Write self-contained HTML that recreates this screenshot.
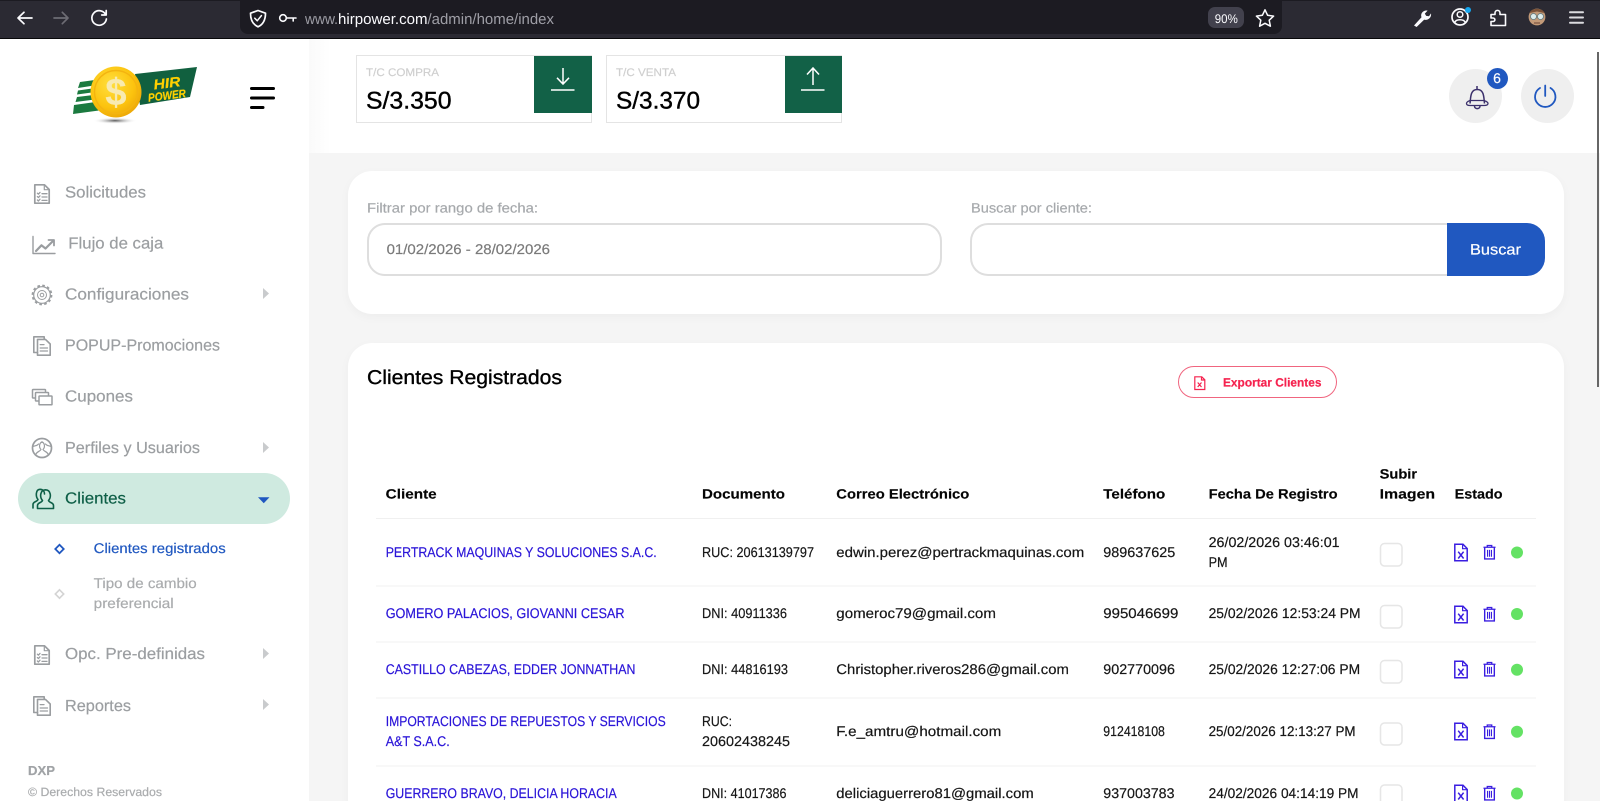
<!DOCTYPE html>
<html lang="es">
<head>
<meta charset="utf-8">
<title>HIR Power - Clientes Registrados</title>
<style>
html,body{margin:0;padding:0;width:1600px;height:801px;overflow:hidden;background:#f5f5f5;font-family:"Liberation Sans",sans-serif}
#wrap{position:relative;width:1600px;height:801px;overflow:hidden;background:#f5f5f5}
.abs{position:absolute}
#bar{left:0;top:0;width:1600px;background:#2b2a33;border-top:1px solid #1c1b22;border-bottom:1px solid #08080a;box-sizing:content-box;height:37px}
#url{left:240px;top:1px;width:1042px;height:33px;background:#1c1b22;border-radius:0 0 8px 8px}
#zoomp{left:1208px;top:7px;width:36px;height:21px;background:#42414d;border-radius:7px}
#side{left:0;top:39px;width:309px;height:762px;background:#fff}
#top{left:309px;top:39px;width:1291px;height:114px;background:linear-gradient(90deg,#fafafa 0,#fff 22px)}
.tc{top:54.500px;height:68.500px;box-sizing:border-box;border:1px solid #e4e4e4;background:#fff}
.tcg{top:56px;height:57px;background:#126147}
.circ{top:69px;width:53px;height:54px;border-radius:50%;background:#efefef}
#badge{left:1486.500px;top:67.500px;width:21px;height:21px;border-radius:50%;background:#2058c0}
.card{left:348px;width:1216px;background:#fff;border-radius:24px;box-shadow:0 3px 10px rgba(0,0,0,.035)}
.inp{top:222.500px;height:53px;box-sizing:border-box;border:2px solid #dedede;background:#fff}
#pill{left:18px;top:473px;width:272px;height:51px;border-radius:26px;background:#cfeae0}
#btn{left:1446.500px;top:222.500px;width:98.500px;height:53px;background:#2058c0;border-radius:0 18px 18px 0}
#exp{left:1178px;top:366px;width:159px;height:32px;box-sizing:border-box;border:1.500px solid #f0657f;border-radius:16px;background:#fff}
#scroll{left:1597px;top:52px;width:1.500px;height:335px;background:#666}
svg#o{position:absolute;left:0;top:0;width:1600px;height:801px;overflow:hidden;text-rendering:geometricPrecision;font-family:"Liberation Sans",sans-serif;color:#161616}
text{font-size:14px;fill:currentColor;stroke:currentColor;stroke-width:.2px}
.m{font-size:16px;color:#9b9ea1}
.h{font-weight:bold;font-size:13.500px;color:#050505;stroke-width:.15px}
.c{color:#2a14d8}
.l{font-size:13.500px;color:#a6a9ac}
.bar{stroke-width:0}
.ic{fill:none;stroke:#9a9da0;stroke-width:1.500;stroke-linejoin:round;stroke-linecap:round}
</style>
</head>
<body>
<div id="wrap">
<div class="abs" id="side"></div>
<div class="abs" id="top"></div>
<div class="abs" id="bar"></div>
<div class="abs" id="url"></div>
<div class="abs" id="zoomp"></div>

<div class="abs tc" style="left:355.500px;width:236px"></div>
<div class="abs tcg" style="left:534px;width:57.500px"></div>
<div class="abs tc" style="left:606px;width:236px"></div>
<div class="abs tcg" style="left:785px;width:56.500px"></div>
<div class="abs circ" style="left:1449px"></div>
<div class="abs circ" style="left:1520.500px"></div>
<div class="abs" id="badge"></div>

<div class="abs card" style="top:171px;height:143px"></div>
<div class="abs card" style="top:343px;height:480px"></div>
<div class="abs inp" style="left:367px;width:574.500px;border-radius:18px"></div>
<div class="abs inp" style="left:970px;width:477px;border-radius:18px 0 0 18px;border-right:0"></div>
<div class="abs" id="btn"></div>
<div class="abs" id="exp"></div>
<div class="abs" id="pill"></div>
<div class="abs" id="scroll"></div>

<svg id="o" viewBox="0 0 1600 801" xmlns="http://www.w3.org/2000/svg">
<defs>
<radialGradient id="coin" cx="40%" cy="35%" r="75%"><stop offset="0" stop-color="#ffdf3d"/><stop offset=".6" stop-color="#fcc30e"/><stop offset="1" stop-color="#e8a006"/></radialGradient>
<radialGradient id="sh"><stop offset="0" stop-color="#555"/><stop offset="1" stop-color="#fff" stop-opacity="0"/></radialGradient>
<symbol id="xls" viewBox="0 0 14 18" overflow="visible">
<path d="M.8.8H9L13.2 5V17.2H.8Z" fill="none" stroke="#3a1ee0" stroke-width="1.500" stroke-linejoin="miter"/>
<path d="M8.600 1V5.200H13" fill="none" stroke="#3a1ee0" stroke-width="1.200"/>
<path d="M4.200 8.200L9.600 15M9.600 8.200L4.200 15" fill="none" stroke="#3a1ee0" stroke-width="1.500"/>
</symbol>
<symbol id="tr" viewBox="0 0 14 16" overflow="visible">
<path d="M.5 2.600H13.500M4.600 2.400V.7H9.400V2.400" fill="none" stroke="#3a1ee0" stroke-width="1.400"/>
<path d="M1.800 2.800V15.200H12.200V2.800" fill="none" stroke="#3a1ee0" stroke-width="1.500"/>
<path d="M4.900 5.500V12.800M7 5.500V12.800M9.100 5.500V12.800" fill="none" stroke="#3a1ee0" stroke-width="1.200"/>
</symbol>
<symbol id="doc" viewBox="0 0 16 20" overflow="visible">
<path d="M.8.8H10.500L15.200 5.500V19.200H.8Z" fill="none" stroke-width="1.700"/>
<path d="M10.300 1V5.700H15" fill="none" stroke-width="1.200"/>
<path d="M3.400 9.200l1 1 1.600-1.800M3.400 12.600l1 1 1.600-1.800M3.400 16l1 1 1.600-1.800M8 9.700h5M8 13h5M8 16.400h5" fill="none" stroke-width="1.300"/>
</symbol>
<symbol id="docs" viewBox="0 0 18 20" overflow="visible">
<path d="M4.500 16.500H.8V.8H11.200V3" fill="none" stroke-width="1.600"/>
<path d="M4.500 3.400H12.500L17.200 8V19.200H4.500Z" fill="none" stroke-width="1.600"/>
<path d="M7.200 8.600H11M7.200 12H14.500M7.200 15H14.500" fill="none" stroke-width="1.300"/>
</symbol>
<symbol id="caret" viewBox="0 0 6 11" overflow="visible"><path d="M0 0L6 5.500L0 11Z" fill="#c9cbcd"/></symbol>
</defs>

<!-- browser toolbar -->
<g fill="none" stroke-linecap="round" stroke-linejoin="round" stroke-width="1.700" stroke="#fbfbfe">
<path d="M32 18H18M24 12.300L18 18L24 23.700"/>
<path d="M54 18H68M62.300 12.300L68 18L62.300 23.700" stroke="#6d6c74"/>
<path d="M105.600 14.500A7.300 7.300 0 1 0 106.400 19M106.200 10.500V15H101.700"/>
<path d="M258 10.500L265.500 13.200C265.500 20 263 24.500 258 26.800C253 24.500 250.500 20 250.500 13.200Z"/>
<path d="M254.800 18.200L257.200 20.800L261.400 15.600" stroke-width="1.500"/>
<circle cx="283" cy="18" r="3.300" stroke-width="1.600"/>
<path d="M286.500 18H296M293.200 18V21" stroke-width="1.600"/>
<path d="M1265 9.800L1267.600 15.300L1273.600 16.100L1269.200 20.200L1270.400 26.200L1265 23.300L1259.600 26.200L1260.800 20.200L1256.400 16.100L1262.400 15.300Z" stroke-width="1.500"/>
<circle cx="1460" cy="17" r="8" stroke-width="1.700"/>
<circle cx="1460" cy="14.500" r="2.800" stroke-width="1.500"/>
<path d="M1454.800 22.400C1456 18.800 1464 18.800 1465.200 22.400" stroke-width="1.500"/>
<path d="M1491 14.500H1495V13C1495 9.500 1500 9.500 1500 13V14.500H1505.500V25.500H1491V21.500H1493C1495.500 21.500 1495.500 18 1493 18H1491Z" stroke-width="1.600"/>
<path d="M1570 12.300H1583M1570 17.500H1583M1570 22.700H1583" stroke="#dcdce0" stroke-width="2"/>
</g>
<path d="M1414 25.500L1421.500 17.200C1420 13.500 1423.500 9.600 1427.600 10.600L1424.800 13.600L1426.200 15.900L1429 16.200L1431 13.400C1431.800 17.800 1427.600 20.800 1424.200 19.600L1416.600 27Z" fill="#fbfbfe"/>
<circle cx="1468" cy="10" r="3" fill="#14a6ef"/>
<circle cx="1537" cy="17" r="8.400" fill="#c39a78"/>
<path d="M1529.500 13C1531 7.500 1543 7.500 1544.500 13L1537 11.500Z" fill="#7a5238"/>
<circle cx="1533.500" cy="16.500" r="3" fill="#dcecec" stroke="#5f7a80" stroke-width=".8"/>
<circle cx="1540.500" cy="16.500" r="3" fill="#dcecec" stroke="#5f7a80" stroke-width=".8"/>
<path d="M1534 23H1540" stroke="#7a5340" stroke-width="1.200"/>
<text class="bar" x="305" y="24" textLength="33" lengthAdjust="spacingAndGlyphs" style="font-size:15px;color:#9e9ea6">www.</text>
<text class="bar" x="338" y="24" textLength="89.500" lengthAdjust="spacingAndGlyphs" style="font-size:15px;color:#fbfbfe">hirpower.com</text>
<text class="bar" x="427.500" y="24" textLength="126.500" lengthAdjust="spacingAndGlyphs" style="font-size:15px;color:#9e9ea6">/admin/home/index</text>
<text class="bar" x="1214.800" y="23" textLength="23" lengthAdjust="spacingAndGlyphs" style="font-size:12.500px;color:#fbfbfe">90%</text>

<!-- logo -->
<ellipse cx="115" cy="120.700" rx="22" ry="3.200" fill="url(#sh)"/>
<path d="M80 82L110 78V83L78 88Z M78 90.500L110 86V90L77 94.500Z M77 97L110 93V97.500L75.500 102Z M74 105L110 100V109L73 114Z" fill="#1b7a3f"/>
<path d="M135 74L197 67L190 97L140 105Z" fill="#11603f"/>
<circle cx="116" cy="92" r="25.500" fill="url(#coin)"/>
<circle cx="116" cy="92" r="21.500" fill="none" stroke="#f4b410" stroke-width="1.400"/>
<text x="116" y="105" text-anchor="middle" style="font-size:38px;font-weight:bold;color:#f8eab0">$</text>
<g transform="rotate(-7 166 88)">
<text x="154" y="88" textLength="27" lengthAdjust="spacingAndGlyphs" style="font-size:14px;font-weight:bold;font-style:italic;color:#ffd000">HIR</text>
<text x="147" y="99.500" textLength="38" lengthAdjust="spacingAndGlyphs" style="font-size:11.500px;font-weight:bold;font-style:italic;color:#ffd000">POWER</text>
</g>
<path d="M251.500 88.500H273.500M251.500 98H273.500M251.500 107.500H263" stroke="#000" stroke-width="3" stroke-linecap="round"/>

<!-- sidebar icons -->
<use href="#doc" x="34" y="184" width="16" height="20" class="ic"/>
<g class="ic">
<path d="M33 236.500V253.500H55" stroke-width="1.400"/>
<path d="M36 251L41.500 245.300L45.500 248.500L53 241" stroke-width="2.200"/>
<path d="M48.500 240H54V245.500" stroke-width="1.800"/>
<circle cx="42" cy="295" r="8.300" stroke-width="1.200"/>
<circle cx="42" cy="295" r="9.500" stroke-width="1.800" stroke-dasharray="2.600 2.370" stroke-linecap="butt"/>
<circle cx="42" cy="295" r="4.500" stroke-width="1"/>
<circle cx="42" cy="295" r="1.800" stroke-width="1"/>
</g>
<use href="#docs" x="33" y="336" width="18" height="20" class="ic"/>
<g class="ic" stroke-width="1.500">
<rect x="32.500" y="389.500" width="13" height="8.500" rx=".6"/>
<rect x="35.500" y="392.500" width="13" height="8.500" rx=".6" fill="#fff"/>
<rect x="39" y="396" width="13" height="8.800" rx=".6" fill="#fff"/>
<circle cx="42" cy="448" r="9.500" stroke-width="1.700"/>
<path d="M35.500 455C37 451 39.500 452 41 449.500C39 447.500 38.800 443.500 42 441.800C45.200 443.500 45 447.500 43 449.500C44.500 452 47 451 48.500 455M33 446.500C35 445.500 37 446 38.500 444M45.500 444C47 446 49 445.500 51 446.500" stroke-width="1.200"/>
</g>
<g fill="none" stroke="#0e5f47" stroke-width="1.600" stroke-linejoin="round" stroke-linecap="round">
<path d="M33 508V504.500C33 501.500 37 502 38 499.500C35.500 496.500 35.500 489.500 40 489.300C43 489.300 44.500 491.500 44.500 494"/>
<path d="M37.500 508.500V505.500C37.500 502.500 41.500 503 42.500 500.500C39.500 497 40 490 45.500 489.800C51 490 51.500 497 48.500 500.500C49.500 503 53.500 502.500 53.500 505.500V508.500Z"/>
</g>
<use href="#doc" x="34" y="645" width="16" height="20" class="ic"/>
<use href="#docs" x="33" y="696" width="18" height="20" class="ic"/>
<use href="#caret" x="263" y="288" width="6" height="11"/>
<use href="#caret" x="263" y="442" width="6" height="11"/>
<use href="#caret" x="263" y="648" width="6" height="11"/>
<use href="#caret" x="263" y="699" width="6" height="11"/>
<path d="M258 497.200H269.500L263.750 503.200Z" fill="#1f57c0"/>
<path d="M59.500 544.800L63.700 549L59.500 553.200L55.300 549Z" fill="none" stroke="#1f57c0" stroke-width="1.800"/>
<path d="M59.500 589.800L63.700 594L59.500 598.200L55.300 594Z" fill="none" stroke="#d4d4d4" stroke-width="1.600"/>

<!-- sidebar text -->
<text class="m" x="65" y="197.500" textLength="81" lengthAdjust="spacingAndGlyphs">Solicitudes</text>
<text class="m" x="68.300" y="248.500" textLength="95" lengthAdjust="spacingAndGlyphs">Flujo de caja</text>
<text class="m" x="65" y="299.500" textLength="124" lengthAdjust="spacingAndGlyphs">Configuraciones</text>
<text class="m" x="65" y="350.500" textLength="155" lengthAdjust="spacingAndGlyphs">POPUP-Promociones</text>
<text class="m" x="65" y="401.500" textLength="68" lengthAdjust="spacingAndGlyphs">Cupones</text>
<text class="m" x="65" y="453" textLength="135" lengthAdjust="spacingAndGlyphs">Perfiles y Usuarios</text>
<text class="m" x="65" y="503.500" textLength="61" lengthAdjust="spacingAndGlyphs" style="color:#0e5f47">Clientes</text>
<text x="93.700" y="553" textLength="132" lengthAdjust="spacingAndGlyphs" style="color:#2058c0">Clientes registrados</text>
<text x="93.700" y="588" textLength="103" lengthAdjust="spacingAndGlyphs" style="color:#aaacae">Tipo de cambio</text>
<text x="93.700" y="608" textLength="80" lengthAdjust="spacingAndGlyphs" style="color:#aaacae">preferencial</text>
<text class="m" x="65" y="659" textLength="140" lengthAdjust="spacingAndGlyphs">Opc. Pre-definidas</text>
<text class="m" x="65" y="711" textLength="66" lengthAdjust="spacingAndGlyphs">Reportes</text>
<text x="28" y="775" textLength="27" lengthAdjust="spacingAndGlyphs" style="font-size:13px;font-weight:bold;color:#a0a3a6">DXP</text>
<text x="28" y="796" textLength="134" lengthAdjust="spacingAndGlyphs" style="font-size:12px;color:#aaacae">© Derechos Reservados</text>

<!-- exchange rates -->
<text x="366" y="76" textLength="73" lengthAdjust="spacingAndGlyphs" style="font-size:11px;color:#cfcfcf">T/C COMPRA</text>
<text x="366" y="108.500" textLength="85.500" lengthAdjust="spacingAndGlyphs" style="font-size:24px;color:#000;stroke-width:.4px">S/3.350</text>
<text x="616" y="76" textLength="60" lengthAdjust="spacingAndGlyphs" style="font-size:11px;color:#cfcfcf">T/C VENTA</text>
<text x="616" y="108.500" textLength="84" lengthAdjust="spacingAndGlyphs" style="font-size:24px;color:#000;stroke-width:.4px">S/3.370</text>
<g fill="none" stroke="#fff" stroke-width="1.500">
<path d="M563 68V83.500M557 77.800L563 84L569 77.800"/>
<path d="M551 90H574.500"/>
<path d="M813 85V68.500M807 74.500L813 68L819 74.500"/>
<path d="M801 90H824.500"/>
</g>

<!-- bell and power -->
<g fill="none" stroke="#3a2f6b" stroke-width="1.500" stroke-linejoin="round">
<path d="M1477 86V89M1470 103.500C1470.500 99 1470.500 95 1472 92.500C1474 88.500 1480.500 88.500 1482.500 92.500C1484 95 1484 99 1484.500 103.500"/>
<path d="M1466.500 103.500C1466.500 101.500 1469 101 1470 100.500H1484C1485 101 1488 101.500 1488 103.500C1488 105.500 1485 105.500 1484 105.500H1470C1469 105.500 1466.500 105.500 1466.500 103.500Z" stroke-width="1.300"/>
<path d="M1474.500 106C1474.500 109.500 1480 109.500 1480 106"/>
</g>
<g fill="none" stroke="#2058c0" stroke-width="1.800" stroke-linecap="round">
<path d="M1540 88A10.200 10.200 0 1 0 1550.500 88"/>
<path d="M1545.200 85.500V96"/>
</g>
<text x="1497" y="83" text-anchor="middle" style="font-size:14px;color:#fff">6</text>

<!-- filter card -->
<text class="l" x="367" y="212.500" textLength="171" lengthAdjust="spacingAndGlyphs">Filtrar por rango de fecha:</text>
<text class="l" x="971" y="212.500" textLength="121" lengthAdjust="spacingAndGlyphs">Buscar por cliente:</text>
<text x="386.600" y="254" textLength="163.400" lengthAdjust="spacingAndGlyphs" style="color:#7a7a7a">01/02/2026 - 28/02/2026</text>
<text x="1470" y="254.500" textLength="51" lengthAdjust="spacingAndGlyphs" style="font-size:15px;color:#fff">Buscar</text>

<!-- table card head -->
<text x="367" y="384" textLength="195" lengthAdjust="spacingAndGlyphs" style="font-size:20px;color:#000;stroke-width:.35px">Clientes Registrados</text>
<path d="M1194.800 376.800H1201.800L1204.800 379.800V389.500H1194.800Z M1201.500 377V380H1204.500 M1197.700 382.500L1201.500 387M1201.500 382.500L1197.700 387" fill="none" stroke="#f5234f" stroke-width="1.200"/>
<text x="1223" y="386.500" textLength="98.500" lengthAdjust="spacingAndGlyphs" style="font-size:12px;font-weight:bold;color:#f5234f">Exportar Clientes</text>

<!-- table -->
<path d="M376 518.500H1536" stroke="#f0f0f0"/>
<path d="M376 586H1536M376 642H1536M376 698H1536M376 766H1536" stroke="#f6f6f6" stroke-width="1.500"/>

<text class="h" x="385.700" y="498.500" textLength="51" lengthAdjust="spacingAndGlyphs">Cliente</text>
<text class="h" x="702" y="498.500" textLength="83" lengthAdjust="spacingAndGlyphs">Documento</text>
<text class="h" x="836.300" y="498.500" textLength="133" lengthAdjust="spacingAndGlyphs">Correo Electrónico</text>
<text class="h" x="1103.300" y="498.500" textLength="62" lengthAdjust="spacingAndGlyphs">Teléfono</text>
<text class="h" x="1208.600" y="498.500" textLength="129" lengthAdjust="spacingAndGlyphs">Fecha De Registro</text>
<text class="h" x="1379.600" y="478.500" textLength="37.500" lengthAdjust="spacingAndGlyphs">Subir</text>
<text class="h" x="1379.600" y="498.500" textLength="55.500" lengthAdjust="spacingAndGlyphs">Imagen</text>
<text class="h" x="1454.600" y="498.500" textLength="48" lengthAdjust="spacingAndGlyphs">Estado</text>

<text class="c" x="385.700" y="557" textLength="271" lengthAdjust="spacingAndGlyphs">PERTRACK MAQUINAS Y SOLUCIONES S.A.C.</text>
<text x="702" y="557" textLength="112" lengthAdjust="spacingAndGlyphs">RUC: 20613139797</text>
<text x="836.300" y="557" textLength="248" lengthAdjust="spacingAndGlyphs">edwin.perez@pertrackmaquinas.com</text>
<text x="1103.300" y="557" textLength="72" lengthAdjust="spacingAndGlyphs">989637625</text>
<text x="1208.600" y="547" textLength="131" lengthAdjust="spacingAndGlyphs">26/02/2026 03:46:01</text>
<text x="1208.600" y="567" textLength="19" lengthAdjust="spacingAndGlyphs">PM</text>

<text class="c" x="385.700" y="618" textLength="238.800" lengthAdjust="spacingAndGlyphs">GOMERO PALACIOS, GIOVANNI CESAR</text>
<text x="702" y="618" textLength="85" lengthAdjust="spacingAndGlyphs">DNI: 40911336</text>
<text x="836.300" y="618" textLength="159.600" lengthAdjust="spacingAndGlyphs">gomeroc79@gmail.com</text>
<text x="1103.300" y="618" textLength="75" lengthAdjust="spacingAndGlyphs">995046699</text>
<text x="1208.600" y="618" textLength="152" lengthAdjust="spacingAndGlyphs">25/02/2026 12:53:24 PM</text>

<text class="c" x="385.700" y="674" textLength="249.800" lengthAdjust="spacingAndGlyphs">CASTILLO CABEZAS, EDDER JONNATHAN</text>
<text x="702" y="674" textLength="86" lengthAdjust="spacingAndGlyphs">DNI: 44816193</text>
<text x="836.300" y="674" textLength="232.600" lengthAdjust="spacingAndGlyphs">Christopher.riveros286@gmail.com</text>
<text x="1103.300" y="674" textLength="71.600" lengthAdjust="spacingAndGlyphs">902770096</text>
<text x="1208.600" y="674" textLength="151.500" lengthAdjust="spacingAndGlyphs">25/02/2026 12:27:06 PM</text>

<text class="c" x="385.700" y="726" textLength="280" lengthAdjust="spacingAndGlyphs">IMPORTACIONES DE REPUESTOS Y SERVICIOS</text>
<text class="c" x="385.700" y="746" textLength="64" lengthAdjust="spacingAndGlyphs">A&amp;T S.A.C.</text>
<text x="702" y="726" textLength="30" lengthAdjust="spacingAndGlyphs">RUC:</text>
<text x="702" y="746" textLength="88" lengthAdjust="spacingAndGlyphs">20602438245</text>
<text x="836.300" y="736" textLength="165" lengthAdjust="spacingAndGlyphs">F.e_amtru@hotmail.com</text>
<text x="1103.300" y="736" textLength="61.600" lengthAdjust="spacingAndGlyphs">912418108</text>
<text x="1208.600" y="736" textLength="147" lengthAdjust="spacingAndGlyphs">25/02/2026 12:13:27 PM</text>

<text class="c" x="385.700" y="798" textLength="231" lengthAdjust="spacingAndGlyphs">GUERRERO BRAVO, DELICIA HORACIA</text>
<text x="702" y="798" textLength="84.500" lengthAdjust="spacingAndGlyphs">DNI: 41017386</text>
<text x="836.300" y="798" textLength="197.400" lengthAdjust="spacingAndGlyphs">deliciaguerrero81@gmail.com</text>
<text x="1103.300" y="798" textLength="71.200" lengthAdjust="spacingAndGlyphs">937003783</text>
<text x="1208.600" y="798" textLength="150" lengthAdjust="spacingAndGlyphs">24/02/2026 04:14:19 PM</text>

<g fill="#fff" stroke="#e6e6e6" stroke-width="1.500">
<rect x="1380.500" y="543.500" width="21.500" height="22.500" rx="4"/>
<rect x="1380.500" y="605.500" width="21.500" height="22.500" rx="4"/>
<rect x="1380.500" y="660.500" width="21.500" height="22.500" rx="4"/>
<rect x="1380.500" y="723" width="21.500" height="22" rx="4"/>
<rect x="1380.500" y="785" width="21.500" height="22.500" rx="4"/>
</g>
<use href="#xls" x="1454" y="543.500" width="14" height="18"/><use href="#tr" x="1483" y="544.500" width="13" height="15.500"/><circle cx="1517" cy="552.500" r="6" fill="#64e264"/>
<use href="#xls" x="1454" y="605.500" width="14" height="18"/><use href="#tr" x="1483" y="606.500" width="13" height="15.500"/><circle cx="1517" cy="614" r="6" fill="#64e264"/>
<use href="#xls" x="1454" y="660.500" width="14" height="18"/><use href="#tr" x="1483" y="661.500" width="13" height="15.500"/><circle cx="1517" cy="669.800" r="6" fill="#64e264"/>
<use href="#xls" x="1454" y="722.500" width="14" height="18"/><use href="#tr" x="1483" y="724" width="13" height="15.500"/><circle cx="1517" cy="731.800" r="6" fill="#64e264"/>
<use href="#xls" x="1454" y="784.500" width="14" height="18"/><use href="#tr" x="1483" y="785.500" width="13" height="15.500"/><circle cx="1517" cy="793.500" r="6" fill="#64e264"/>
</svg>
</div>
</body>
</html>
